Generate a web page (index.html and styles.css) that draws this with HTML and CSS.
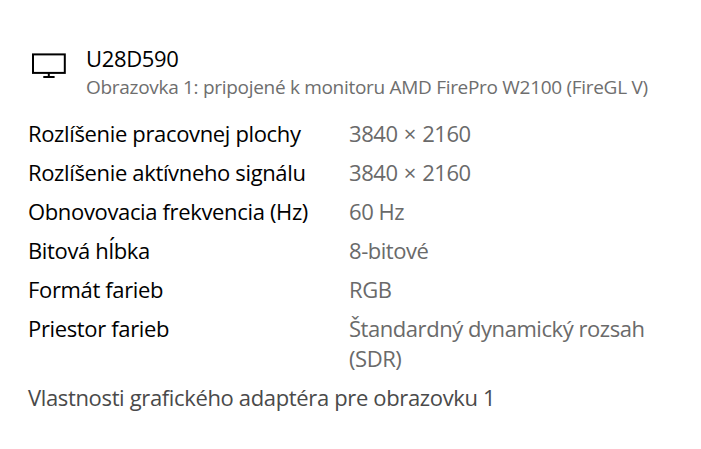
FILE: index.html
```html
<!DOCTYPE html>
<html lang="sk">
<head>
    <meta charset="UTF-8">
    <meta name="viewport" content="width=device-width, initial-scale=1.0">
    <title>U28D590</title>
    <link rel="stylesheet" href="styles.css">
</head>
<body>

<div class="display-info">
    <div class="display-header">
        <svg class="display-icon" width="36" height="27" viewBox="0 0 36 27">
            <rect x="2" y="2.4" width="31.8" height="18.5" fill="none" stroke="#000" stroke-width="2"/>
            <path d="M17.8 21v4M12.3 25h11.3" fill="none" stroke="#000" stroke-width="2"/>
        </svg>
        <div class="display-title">
            <h1>U28D590</h1>
            <p>Obrazovka 1: pripojené k monitoru AMD FirePro W2100 (FireGL V)</p>
        </div>
    </div>

    <dl class="display-details">
        <dt>Rozlíšenie pracovnej plochy</dt>
        <dd class="resolution">3840 × 2160</dd>
        <dt>Rozlíšenie aktívneho signálu</dt>
        <dd class="resolution">3840 × 2160</dd>
        <dt>Obnovovacia frekvencia (Hz)</dt>
        <dd>60 Hz</dd>
        <dt>Bitová hĺbka</dt>
        <dd>8-bitové</dd>
        <dt>Formát farieb</dt>
        <dd>RGB</dd>
        <dt>Priestor farieb</dt>
        <dd>Štandardný dynamický rozsah (SDR)</dd>
    </dl>

    <a class="adapter-link">Vlastnosti grafického adaptéra pre obrazovku 1</a>
</div>

</body>
</html>
```
FILE: styles.css
```css
body {
    margin: 0;
    background: #fff;
    font-family: "Open Sans", "Noto Sans", sans-serif;
    font-size: 22px;
    line-height: 30px;
    letter-spacing: -0.35px;
    color: #000;
}
.display-info {
    padding: 43px 20px 0 28px;
}
.display-header {
    display: flex;
    gap: 19px;
}
.display-icon {
    flex: none;
    margin: 9px 0 0 3px;
}
.display-title h1,
.display-title p {
    margin: 0;
    font-weight: 400;
    white-space: nowrap;
}
.display-title h1 {
    font-size: 22px;
    line-height: 30px;
}
.display-title p {
    font-size: 19px;
    line-height: 28px;
    letter-spacing: -0.3px;
    color: #6e6e6e;
}
.display-details {
    display: grid;
    grid-template-columns: 321px 310px;
    row-gap: 9px;
    margin: 17px 0 0;
}
.display-details dt,
.display-details dd {
    margin: 0;
}
.display-details dd {
    letter-spacing: -0.45px;
    color: #6a6a6a;
}
.display-details .resolution {
    word-spacing: 1px;
}
.adapter-link {
    display: block;
    margin-top: 9px;
    color: #4a4a4a;
}
```
